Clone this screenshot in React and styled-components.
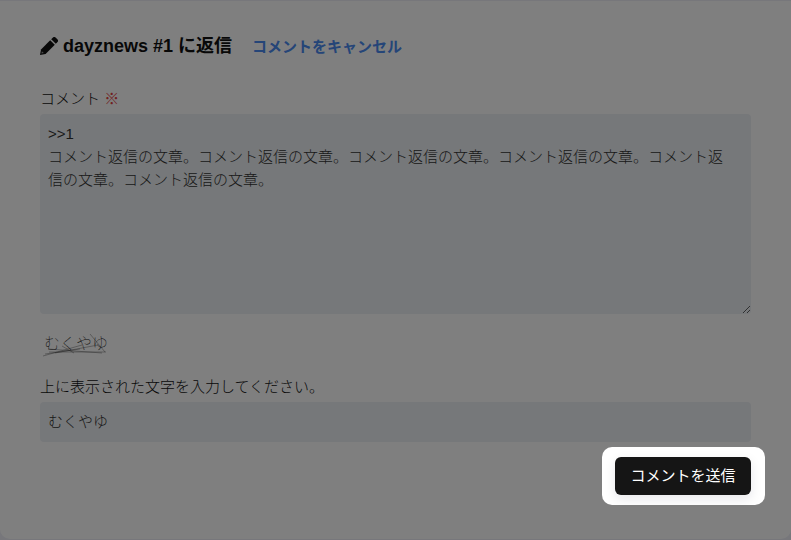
import React, { useState } from "react";
import styled, { createGlobalStyle } from "styled-components";

const App = () => {
  const [comment, setComment] = useState(
    ">>1\n" +
      "コメント返信の文章。".repeat(6)
  );
  const [captcha, setCaptcha] = useState("むくやゆ");

  return (
    <Page>
      <GlobalStyle />
      <Card>
        <Header>
          <PencilIcon viewBox="0 0 18 18" aria-hidden="true">
            <path d="M10.2 3.2 14.8 7.8 5.6 17 0 18 1 12.4Z" />
            <path d="M11.2 2.2 12.7.7a2.2 2.2 0 0 1 3.1 0l1.5 1.5a2.2 2.2 0 0 1 0 3.1l-1.5 1.5Z" />
            <Notch d="M1.9 14.2 3.8 16.1 1.4 16.6Z" />
          </PencilIcon>
          <Title>dayznews #1 に返信</Title>
          <CancelLink href="#comments">コメントをキャンセル</CancelLink>
        </Header>
        <form onSubmit={(e) => e.preventDefault()}>
          <Label htmlFor="comment">
            コメント <Required>※</Required>
          </Label>
          <TextArea
            id="comment"
            value={comment}
            onChange={(e) => setComment(e.target.value)}
          />
          {/* captcha */}
          <Captcha viewBox="0 0 72 32" role="img" aria-label="captcha">
            <text x="4" y="20">むくやゆ</text>
            <path d="M3 27 42 16M9 23h57M8 20l54 4M15 24l43-8M22 17l12 7M50 5l15 18M5 25l35-5" />
          </Captcha>
          <Label htmlFor="captcha">上に表示された文字を入力してください。</Label>
          <Input
            id="captcha"
            type="text"
            value={captcha}
            onChange={(e) => setCaptcha(e.target.value)}
          />
          <Actions>
            <Spotlight>
              <SubmitButton type="submit">コメントを送信</SubmitButton>
            </Spotlight>
          </Actions>
        </form>
      </Card>
    </Page>
  );
};

export default App;

const GlobalStyle = createGlobalStyle`
  * {
    box-sizing: border-box;
  }
  body {
    margin: 0;
    background-color: #efeff7;
    color: #111;
    font-family: "Liberation Sans", "Noto Sans CJK JP", sans-serif;
    font-size: 15px;
    line-height: 23px;
  }
  textarea, input, button {
    font: inherit;
    color: inherit;
  }
`;
const Page = styled.main`
  min-height: 100vh;
  padding-top: 1px;
  overflow: hidden;
`;
const Card = styled.section`
  min-height: calc(100vh - 2px);
  padding: 33px 40px;
  background-color: white;
  border-radius: 0 0 10px 10px;
`;
const Header = styled.header`
  display: flex;
  align-items: center;
  height: 24px;
  margin-bottom: 29px;
`;
const PencilIcon = styled.svg`
  width: 18px;
  height: 18px;
  margin-right: 5px;
  fill: #111;
`;
const Notch = styled.path`
  fill: #999;
`;
const Title = styled.h3`
  margin: 0 20px 0 0;
  font-size: 18px;
  line-height: 24px;
`;
const CancelLink = styled.a`
  color: #4a8af0;
  font-weight: bold;
  text-decoration: none;
`;
const Label = styled.label`
  display: block;
  margin-bottom: 4px;
  font-weight: 300;
`;
const Required = styled.span`
  color: #e44141;
`;
const TextArea = styled.textarea`
  display: block;
  width: 100%;
  height: 200px;
  padding: 8px 20px 8px 8px;
  border: none;
  border-radius: 4px;
  outline: none;
  background-color: #edf0f4;
  color: #333;
  font-weight: 300;
  resize: vertical;
`;
const Captcha = styled.svg`
  display: block;
  width: 72px;
  height: 32px;
  margin: 15px 0 14px;

  text {
    fill: #111;
    font-family: "Noto Sans CJK JP", sans-serif;
    font-size: 16px;
    font-weight: 100;
  }
  path {
    fill: none;
    stroke: #444;
    stroke-width: 0.4;
  }
`;
const Input = styled.input`
  display: block;
  width: 100%;
  height: 40px;
  padding: 6px 8px 10px;
  border: none;
  border-radius: 4px;
  outline: none;
  background-color: #edf0f4;
  color: #333;
  font-weight: 300;
`;
const Actions = styled.div`
  display: flex;
  justify-content: flex-end;
  margin-top: 15px;
`;
const Spotlight = styled.div`
  position: relative;

  /* dims everything around the button */
  &::before {
    content: "";
    position: absolute;
    inset: -10px -14px -10px -13px;
    border-radius: 10px;
    box-shadow: 0 0 0 200vmax rgba(0, 0, 0, 0.5);
    pointer-events: none;
  }
`;
const SubmitButton = styled.button`
  min-width: 136px;
  height: 38px;
  padding: 0 15px 2px;
  border: none;
  border-radius: 6px;
  background-color: #151515;
  color: white;
  box-shadow: 0 4px 12px rgba(20, 20, 50, 0.1);
  cursor: pointer;
`;
